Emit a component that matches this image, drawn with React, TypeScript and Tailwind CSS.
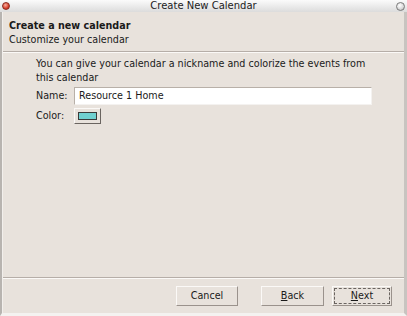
export default function App() {
  return (
    <div
      className="flex h-[316px] w-[407px] flex-col overflow-hidden bg-[#e8e2dc] text-[9.6px] text-[#1a1a1a]"
      style={{ fontFamily: '"DejaVu Sans", sans-serif' }}
    >
      {/* title bar */}
      <div className="relative flex h-[12px] shrink-0 items-center justify-center bg-gradient-to-b from-[#fbfbfb] to-[#dcdcdc] text-[10px] leading-none text-[#222]">
        <span className="absolute left-[2px] top-[2px] h-[8px] w-[8px] rounded-full border border-[#8a2a20] bg-[radial-gradient(circle_at_40%_35%,#f8b0a0,#d8402c_60%,#a82a1c)]" />
        <span>Create New Calendar</span>
        <span className="absolute right-[2px] top-[2px] h-[9px] w-[9px] rounded-full border border-[#7a7a7a] bg-[radial-gradient(circle_at_40%_35%,#ffffff,#d8d8d8_60%,#a8a8a8)]" />
      </div>

      <div className="flex flex-1 border-l-[2px] border-r-[3px] border-b-[3px] border-l-[#b8b4b0] border-r-[#c8c4c0] border-b-[#f4f2f0]">
        <div className="flex flex-1 flex-col border-l border-[#f2efec]">
          {/* header */}
          <div className="flex flex-col gap-[3px] px-[6px] pt-[8px] pb-[6px]">
            <div className="font-bold leading-[11px]">Create a new calendar</div>
            <div className="leading-[11px]">Customize your calendar</div>
          </div>
          <div className="h-[2px] border-t border-b border-t-[#b6aea8] border-b-[#fbf9f7]" />

          {/* content */}
          <div className="flex flex-1 flex-col pl-[33px] pr-[32px] pt-[4px]">
            <div className="leading-[14px]">
              You can give your calendar a nickname and colorize the events from this calendar
            </div>
            <div className="mt-[2px] flex items-center gap-[5px]">
              <span className="w-[33px]">Name:</span>
              <div className="flex h-[18px] flex-1 items-center border border-[#b8b0a8] border-b-[#f4f2f0] border-r-[#f4f2f0] bg-white pl-[4px]">
                Resource 1 Home
              </div>
            </div>
            <div className="mt-[3px] flex items-center gap-[5px]">
              <span className="w-[33px]">Color:</span>
              <div className="flex h-[16px] w-[27px] items-center justify-center border border-[#fbf9f7] border-b-[#6a6460] border-r-[#6a6460]">
                <div className="h-[8px] w-[19px] border border-[#3a3a3a] bg-[#70d0d0]" />
              </div>
            </div>
          </div>

          {/* footer */}
          <div className="h-[2px] border-t border-b border-t-[#b6aea8] border-b-[#fbf9f7]" />
          <div className="flex justify-end gap-[23px] pr-[12px] pt-[7px] pb-[7px]">
            <button className="h-[20px] w-[62px] border border-[#fbf9f7] border-b-[#9a928c] border-r-[#9a928c] bg-[#e8e2dc]">
              Cancel
            </button>
            <div className="flex gap-[8px]">
              <button className="h-[20px] w-[63px] border border-[#fbf9f7] border-b-[#9a928c] border-r-[#9a928c] bg-[#e8e2dc]">
                <span className="underline">B</span>ack
              </button>
              <button className="flex h-[20px] w-[60px] items-center justify-center border border-[#fbf9f7] border-b-[#9a928c] border-r-[#9a928c] bg-[#e8e2dc]">
                <span className="flex h-[16px] w-[56px] items-center justify-center border border-dashed border-[#6a6460]">
                  <span className="underline">N</span>ext
                </span>
              </button>
            </div>
          </div>
        </div>
      </div>
    </div>
  );
}
